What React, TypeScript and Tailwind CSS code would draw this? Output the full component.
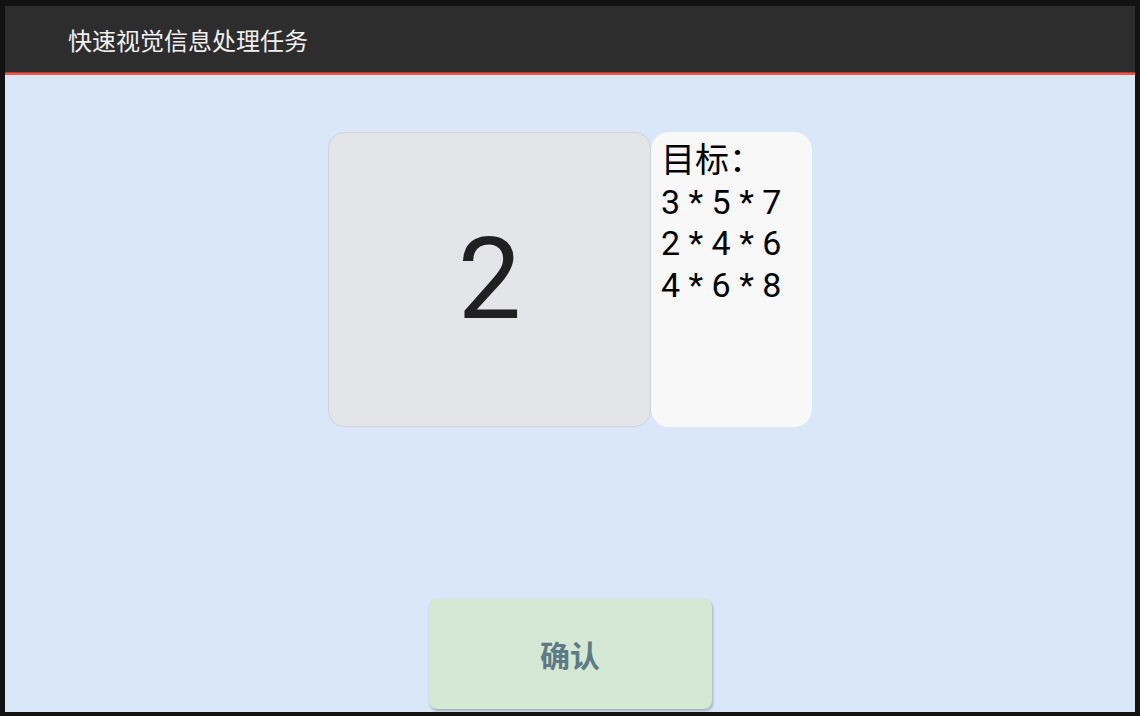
import React from "react";

const targets = ["3 * 5 * 7", "2 * 4 * 6", "4 * 6 * 8"];

export default function App() {
  return (
    <div className="w-[1140px] h-[716px] bg-[#121212] pt-[6px] px-[5px] pb-[4px] font-['Roboto','Noto_Sans_CJK_SC',sans-serif]">
      <div className="w-full h-full flex flex-col bg-[#d9e7f9] overflow-hidden">
        {/* 顶部标题栏 */}
        <div className="h-[66px] bg-[#2d2d2d] flex items-center pl-[63px] pt-[5px]">
          <span className="text-[24px] text-[#f0f0f0]">快速视觉信息处理任务</span>
        </div>
        <div className="h-[1px] bg-[#b8392f]" />
        <div className="h-[2px] bg-[#f0574b]" />

        {/* 内容区 */}
        <div className="flex-1 flex flex-col items-center pt-[57px]">
          <div className="flex">
            <div className="w-[323px] h-[295px] bg-[#e3e5e8] border border-[#cfd3d9] rounded-[16px] flex items-center justify-center">
              <span className="text-[113px] leading-none text-[#202020] font-['Roboto',sans-serif]">2</span>
            </div>
            <div className="w-[161px] h-[295px] bg-[#f8f8f8] rounded-[18px] pt-[8px] pl-[10px] text-[34px] leading-[41.5px] text-black">
              <div>目标：</div>
              {targets.map((t) => (
                <div key={t} className="whitespace-pre">{t}</div>
              ))}
            </div>
          </div>

          <div className="flex-1" />

          <button
            type="button"
            className="w-[283px] h-[110px] mb-[3px] rounded-[8px] bg-[#d4e8d4] shadow-[1px_2px_3px_rgba(0,0,0,0.25)] flex items-center justify-center"
          >
            <span className="text-[30px] font-bold text-[#5d7a86] pt-[4px]">确认</span>
          </button>
        </div>
      </div>
    </div>
  );
}
